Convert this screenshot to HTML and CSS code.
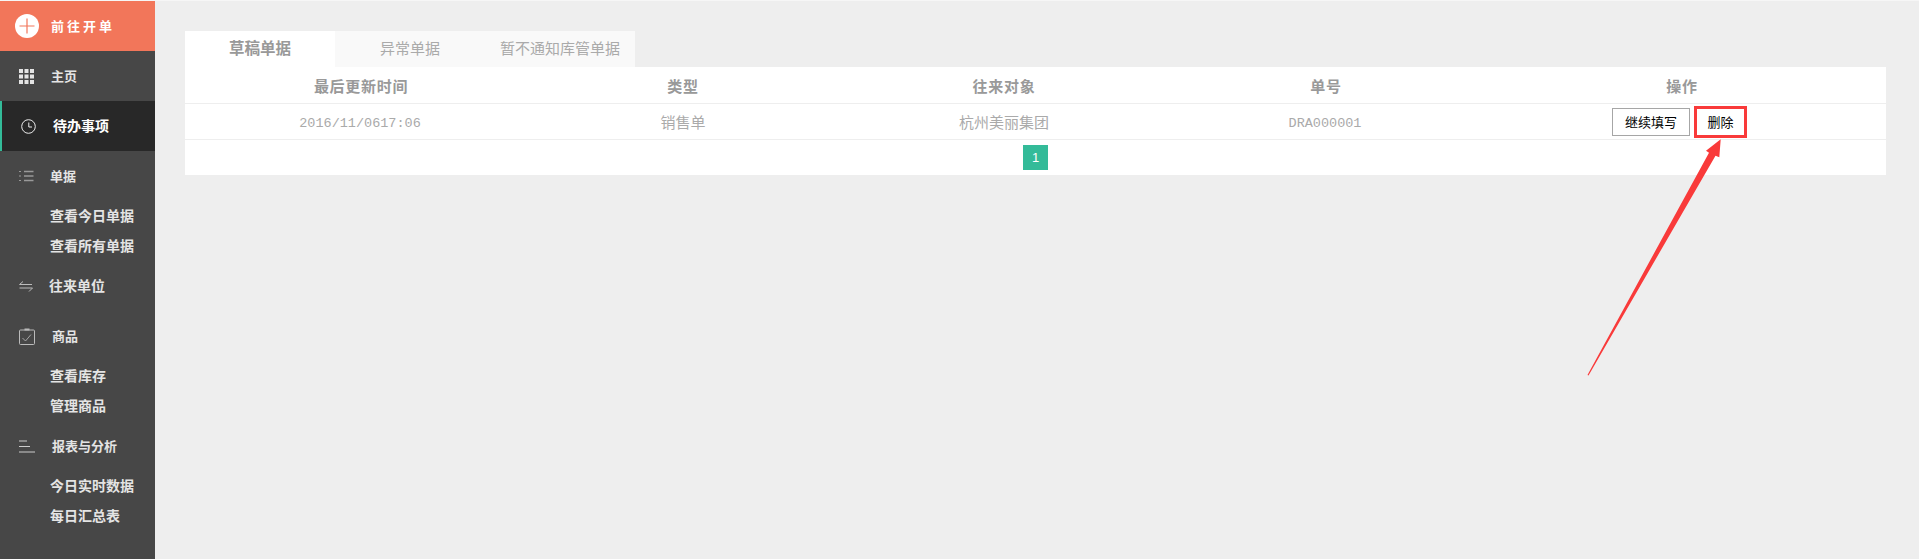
FILE: index.html
```html
<!DOCTYPE html>
<html lang="zh-CN">
<head>
  <meta charset="UTF-8" />
  <title>待办事项</title>
  <link rel="stylesheet" href="styles.css">
</head>
<body>
<div class="page">
  <aside class="sidebar">
    <a class="new-order" href="#">
      <svg class="plus" width="24" height="24" viewBox="0 0 24 24"><circle cx="12" cy="12" r="12" fill="#fff"/><path d="M12 4.500V19.500M4.500 12H19.500" stroke="#f2765a" stroke-width="1.200" fill="none"/></svg>
      <span>前往开单</span>
    </a>
    <a class="nav-item home" href="#">
      <svg width="15" height="15" viewBox="0 0 15 15" fill="#e4e4e4"><rect x="0" y="0" width="4" height="4"/><rect x="5.500" y="0" width="4" height="4"/><rect x="11" y="0" width="4" height="4"/><rect x="0" y="5.500" width="4" height="4"/><rect x="5.500" y="5.500" width="4" height="4"/><rect x="11" y="5.500" width="4" height="4"/><rect x="0" y="11" width="4" height="4"/><rect x="5.500" y="11" width="4" height="4"/><rect x="11" y="11" width="4" height="4"/></svg>
      <span>主页</span>
    </a>
    <a class="nav-item active" href="#">
      <svg width="15" height="15" viewBox="0 0 15 15" fill="none" stroke="#eee" stroke-width="1"><circle cx="7.500" cy="7.500" r="6.800"/><path d="M7.800 3.500V8H11"/></svg>
      <span>待办事项</span>
    </a>
    <a class="nav-item orders" href="#">
      <svg width="15" height="12" viewBox="0 0 15 12" fill="none" stroke="#999"><path d="M5 1.500H14.500M5 6H14.500M5 10.500H14.500" stroke-width="1.400"/><path d="M0 1.500H2M0 6H2M0 10.500H2" stroke-width="1.200"/></svg>
      <span>单据</span>
    </a>
    <a class="sub-item" href="#"><span>查看今日单据</span></a>
    <a class="sub-item" href="#"><span>查看所有单据</span></a>
    <a class="nav-item partners" href="#">
      <svg width="14" height="11" viewBox="0 0 14 11" fill="none" stroke="#bbb"><path d="M13 3.500H0.500L4 0.500"/><path d="M0.500 7H13.500L10 10.500"/></svg>
      <span>往来单位</span>
    </a>
    <a class="nav-item goods" href="#">
      <svg width="16" height="17" viewBox="0 0 16 17" fill="none" stroke="#bbb"><rect x="0.500" y="2" width="15" height="14.500" rx="1"/><path d="M5.500 1.500H10.500" stroke-width="2"/><path d="M3.500 10L6.500 13L12 6.500" stroke-width="0.800"/></svg>
      <span>商品</span>
    </a>
    <a class="sub-item" href="#"><span>查看库存</span></a>
    <a class="sub-item" href="#"><span>管理商品</span></a>
    <a class="nav-item reports" href="#">
      <svg width="16" height="13" viewBox="0 0 16 13" fill="none" stroke="#ccc"><path d="M0 1H8M0 6.500H11M0 12H16"/></svg>
      <span>报表与分析</span>
    </a>
    <a class="sub-item" href="#"><span>今日实时数据</span></a>
    <a class="sub-item" href="#"><span>每日汇总表</span></a>
  </aside>

  <main class="content">
    <div class="tabs">
      <a class="tab current" href="#">草稿单据</a>
      <a class="tab" href="#">异常单据</a>
      <a class="tab" href="#">暂不通知库管单据</a>
    </div>
    <table class="drafts">
      <thead>
        <tr>
          <th class="col-time">最后更新时间</th>
          <th class="col-type">类型</th>
          <th class="col-target">往来对象</th>
          <th class="col-no">单号</th>
          <th class="col-ops">操作</th>
        </tr>
      </thead>
      <tbody>
        <tr>
          <td class="mono">2016/11/0617:06</td>
          <td>销售单</td>
          <td>杭州美丽集团</td>
          <td class="mono">DRA000001</td>
          <td>
            <div class="ops">
              <button class="btn">继续填写</button>
              <button class="btn marked">删除</button>
            </div>
          </td>
        </tr>
        <tr class="pager-row">
          <td colspan="5"><a class="page-num" href="#">1</a></td>
        </tr>
      </tbody>
    </table>
  </main>
</div>

<svg class="arrow" width="1919" height="559" viewBox="0 0 1919 559">
  <polygon points="1720.700,139.300 1719.300,157.300 1715.500,155.700 1588.500,375.500 1587.500,375 1709,152.700 1706,150.700" fill="#f93a3a"/>
</svg>
</body>
</html>
```

FILE: styles.css
```css
* { box-sizing: border-box; }
html, body { margin: 0; padding: 0; height: 100%; overflow: hidden; }
body { background: #eee; border-top: 1px solid #f6f6f6; font-family: "Liberation Sans", "Noto Sans CJK SC", sans-serif; color: #999; }
a { text-decoration: none; color: inherit; }

.page { display: flex; height: 558px; }

.sidebar { width: 155px; flex-shrink: 0; background: #474747; color: #e4e4e4; font-size: 14px; font-weight: bold; }
.sidebar span { padding-bottom: 2px; }
.new-order { display: flex; align-items: center; height: 50px; padding-left: 15px; background: #f2765a; color: #fff; font-size: 13px; letter-spacing: 3px; }
.new-order .plus { margin-right: 12px; }
.nav-item { display: flex; align-items: center; height: 50px; padding-left: 19px; }
.nav-item svg { flex-shrink: 0; }
.sub-item { display: flex; align-items: center; height: 30px; padding-left: 50px; }

.home span { margin-left: 17px; font-size: 13px; }
.active { background: #282828; color: #fff; border-left: 2px solid #33bb99; padding-left: 19px; }
.active span { margin-left: 17px; }
.orders span { margin-left: 16px; font-size: 13px; }
.partners span { margin-left: 16px; }
.goods span { margin-left: 17px; font-size: 13px; }
.reports span { margin-left: 17px; font-size: 13px; }

.content { flex: 1; padding: 30px 33px 0 30px; }

.tabs { display: flex; }
.tab { width: 150px; height: 36px; line-height: 36px; text-align: center; background: #f9f9f9; color: #aaa; font-size: 15px; }
.tab.current { background: #fff; color: #999; font-weight: bold; font-size: 15.500px; }

.drafts { width: 100%; table-layout: fixed; border-collapse: separate; border-spacing: 0; background: #fff; }
.drafts th, .drafts td { padding: 0; text-align: center; }
.drafts th { height: 37px; font-size: 15px; letter-spacing: .7px; color: #999; border-bottom: 1px solid #eee; }
.drafts td { height: 36px; font-size: 15px; color: #aaa; border-bottom: 1px solid #eee; }
.col-time { width: 352px; }
.col-type { width: 292px; }
.col-target { width: 350px; }
.col-no { width: 294px; }
.col-ops { width: 413px; padding-left: 5px !important; }
.drafts td.mono { font-family: "Liberation Mono", "Noto Sans CJK SC", monospace; font-size: 13.500px; padding: 4px 2px 0 0; }

.ops { display: flex; justify-content: center; align-items: center; gap: 4px; }
.btn { height: 28px; width: 78px; padding: 0; background: #fff; border: 1px solid #a6a6a6; font-family: inherit; font-size: 13px; color: #000; }
.btn.marked { width: 53px; height: 32px; border: 3px solid #f93a3a; }

.drafts .pager-row td { height: 35px; border-bottom: 0; }
.page-num { display: inline-block; vertical-align: middle; width: 25px; height: 25px; line-height: 25px; background: #33bb99; color: #fff; font-size: 13px; }

.arrow { position: absolute; top: 0; left: 0; pointer-events: none; }
```
